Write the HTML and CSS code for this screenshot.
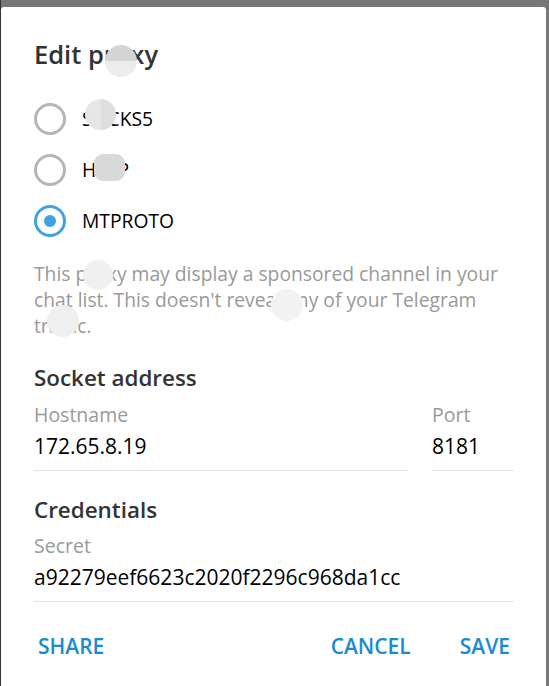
FILE: index.html
```html
<!DOCTYPE html>
<html lang="en">
<head>
<meta charset="utf-8">
<title>Edit proxy</title>
<link rel="stylesheet" href="styles.css">
</head>
<body>
<div class="dialog">
  <h1 class="title">Edit proxy</h1>
  <div class="radios">
    <div class="radio"><span class="mark"></span><span class="rlabel">SOCKS5</span></div>
    <div class="radio"><span class="mark"></span><span class="rlabel">HTTP</span></div>
    <div class="radio checked"><span class="mark"></span><span class="rlabel">MTPROTO</span></div>
  </div>
  <p class="desc">This proxy may display a sponsored channel in your chat list. This doesn't reveal any of your Telegram traffic.</p>
  <h2 class="section first">Socket address</h2>
  <div class="fields">
    <div class="field">
      <div class="flabel">Hostname</div>
      <div class="fvalue">172.65.8.19</div>
    </div>
    <div class="field">
      <div class="flabel">Port</div>
      <div class="fvalue">8181</div>
    </div>
  </div>
  <h2 class="section second">Credentials</h2>
  <div class="field secret">
    <div class="flabel">Secret</div>
    <div class="fvalue">a92279eef6623c2020f2296c968da1cc</div>
  </div>
  <div class="footer">
    <span class="btn">SHARE</span>
    <span class="spacer"></span>
    <span class="btn">CANCEL</span>
    <span class="btn">SAVE</span>
  </div>

  <span class="blob blob-title"></span>
  <span class="blob blob-socks"></span>
  <span class="blob blob-http"></span>
  <span class="blob blob-d1"></span>
  <span class="blob blob-d2"></span>
  <span class="blob blob-d3"></span>
</div>
</body>
</html>
```

FILE: styles.css
```css
html, body {
  margin: 0;
  padding: 0;
  height: 100%;
  overflow: hidden;
}
body {
  background: #787878;
  font-family: "Open Sans", "DejaVu Sans", sans-serif;
  padding-top: 7px;
  box-sizing: border-box;
  border-left: 1px solid #2c372c;
}
.dialog {
  position: relative;
  background: #ffffff;
  width: 545px;
  height: 700px;
  box-sizing: border-box;
  border-radius: 3px 3px 0 0;
  padding: 30px 32px 0 33px;
}
.title {
  margin: 0;
  font-size: 25.5px;
  line-height: 34px;
  font-weight: 600;
  color: #333333;
}
.radios {
  margin-top: 32px;
  display: flex;
  flex-direction: column;
  gap: 19px;
}
.radio {
  display: flex;
  align-items: center;
  height: 32px;
  gap: 16px;
}
.mark {
  width: 32px;
  height: 32px;
  box-sizing: border-box;
  border: 3px solid #b5b5b5;
  border-radius: 50%;
  display: flex;
  align-items: center;
  justify-content: center;
  flex: none;
}
.radio.checked .mark {
  border-color: #3fa3e0;
}
.radio.checked .mark::after {
  content: "";
  width: 12px;
  height: 12px;
  border-radius: 50%;
  background: #3fa3e0;
}
.rlabel {
  font-size: 19.3px;
  line-height: 26px;
  color: #000000;
}
.desc {
  margin: 24px 0 0 0;
  font-size: 19.3px;
  line-height: 26px;
  color: #999999;
}
.section {
  margin: 0;
  font-size: 22.4px;
  line-height: 30px;
  font-weight: 600;
  color: #333333;
}
.section.first { margin-top: 24px; }
.section.second { margin-top: 24px; }
.fields {
  margin-top: 9px;
  display: grid;
  grid-template-columns: 1fr 82px;
  column-gap: 24px;
}
.field.secret { margin-top: 8px; }
.flabel {
  font-size: 19.5px;
  line-height: 26px;
  color: #999999;
}
.fvalue {
  margin-top: 3.5px;
  font-size: 21px;
  line-height: 28px;
  color: #000000;
  padding-bottom: 10.5px;
  border-bottom: 1px solid #e0e0e0;
}
.footer {
  margin-top: 30px;
  display: flex;
  align-items: center;
  padding: 0 4px 0 4px;
  gap: 49px;
}
.spacer { flex: 1; margin-left: -49px; }
.btn {
  font-size: 21px;
  line-height: 28px;
  font-weight: 600;
  color: #1a8bd3;
}
.blob {
  position: absolute;
  width: 31px;
  height: 31px;
  border-radius: 50%;
  background: #efefef;
}
.blob-title {
  left: 104px; top: 38px;
  width: 32px; height: 32px;
  background: linear-gradient(#d4d4d4 0 50%, #ececec 50% 100%);
}
.blob-socks {
  left: 84px; top: 92px;
  background: linear-gradient(90deg, #e6e6e6 0 50%, #dedede 50% 100%);
}
.blob-http {
  left: 93px; top: 147px;
  width: 31px; height: 27px;
  border-radius: 9px;
  background: #d9d9d9;
}
.blob-d1 { left: 82px; top: 253px; width: 30px; height: 30px; background: #f0f0f0; }
.blob-d2 { left: 270px; top: 282px; width: 32px; height: 32px; background: #f2f2f2; }
.blob-d3 { left: 46px; top: 298px; width: 32px; height: 32px; background: #efefef; }
```
